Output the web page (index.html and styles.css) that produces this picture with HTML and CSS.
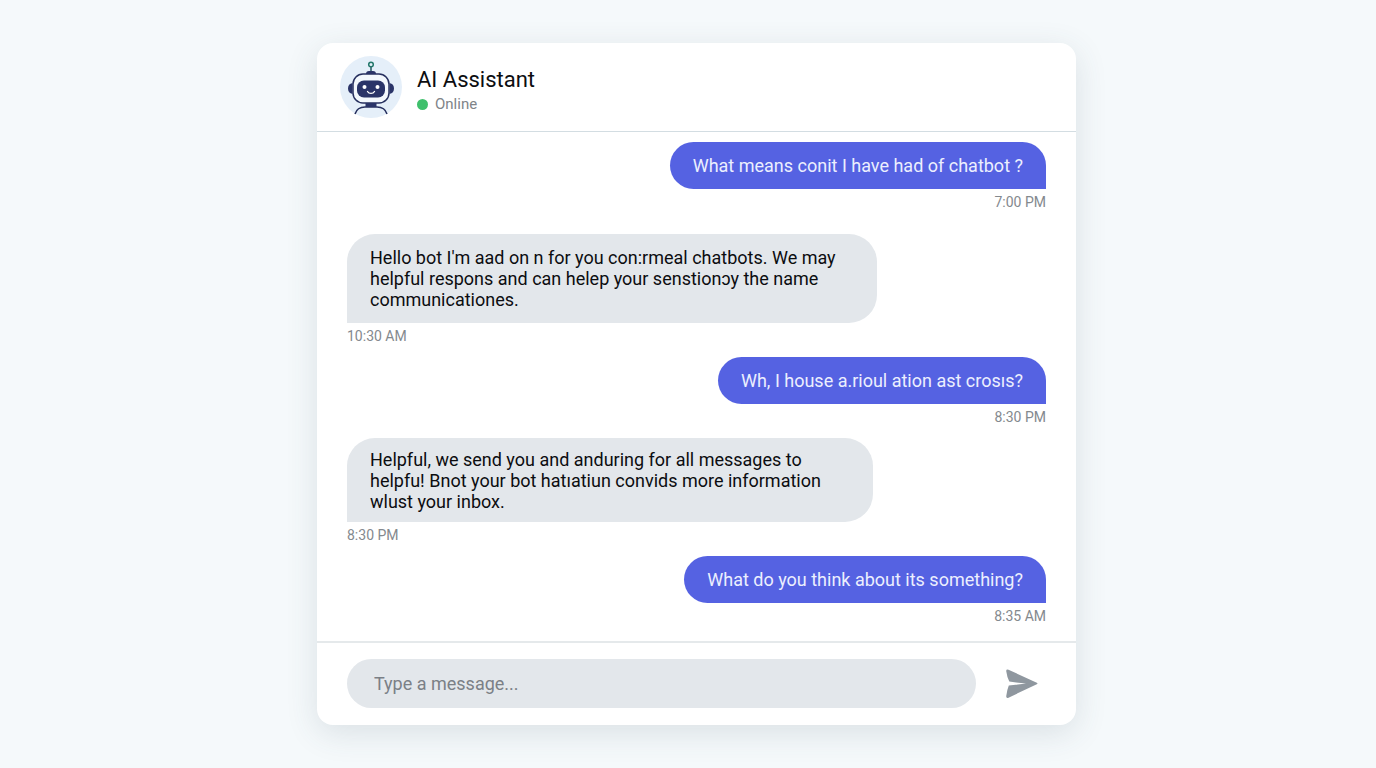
FILE: index.html
```html
<!DOCTYPE html>
<html lang="en">
<head>
<meta charset="UTF-8" />
<meta name="viewport" content="width=device-width, initial-scale=1" />
<title>AI Assistant</title>
<link rel="stylesheet" href="styles.css">
</head>
<body>
<main class="chat">
  <header class="chat-header">
    <svg class="avatar" viewBox="0 0 62 62" aria-hidden="true">
      <circle cx="31" cy="31" r="31" fill="#e5eff9"/>
      <g fill="none" stroke="#27305f" stroke-width="1.5">
        <path d="M31 11v6" stroke="#21565e"/>
        <circle cx="31" cy="8.500" r="2.300" stroke="#23776a"/>
        <rect x="13" y="18" width="36" height="29" rx="10" fill="#f3f8fd"/>
        <path d="M15 58c1.500-5 5-7 10-7h12c5 0 8.500 2 10 7"/>
      </g>
      <g fill="#2a3468">
        <path d="M26 18c0-2 1-3 3-3h4c2 0 3 1 3 3z"/>
        <path d="M12.500 27v11C9.500 37.500 8 35.500 8 32.500s1.500-5 4.500-5.500zM49.500 27v11c3-.5 4.500-2.500 4.500-5.500s-1.500-5-4.500-5.500z"/>
        <rect x="17" y="24.500" width="28" height="17" rx="7"/>
        <rect x="25.500" y="47" width="11" height="4"/>
      </g>
      <circle cx="24.500" cy="31" r="2" fill="#fff"/>
      <circle cx="37.500" cy="31" r="2" fill="#fff"/>
      <path d="M27.500 35.500c1.500 2.500 5.500 2.500 7 0" fill="none" stroke="#fff" stroke-width="1.400" stroke-linecap="round"/>
    </svg>
    <div class="contact">
      <h1>AI Assistant</h1>
      <p class="status">Online</p>
    </div>
  </header>

  <section class="messages" aria-label="Messages">
    <div class="message sent spaced">
      <p class="bubble">What means conit I have had of chatbot ?</p>
      <time>7:00 PM</time>
    </div>
    <div class="message received">
      <p class="bubble">Hello bot I'm aad on n for you con:rmeal chatbots. We may<br>helpful respons and can helep your senstionɔy the name<br>communicationes.</p>
      <time>10:30 AM</time>
    </div>
    <div class="message sent">
      <p class="bubble">Wh, I house a.rioul ation ast crosıs?</p>
      <time>8:30 PM</time>
    </div>
    <div class="message received compact">
      <p class="bubble">Helpful, we send you and anduring for all messages to<br>helpfu! Bnot your bot hatıatiun convids more information<br>wlust your inbox.</p>
      <time>8:30 PM</time>
    </div>
    <div class="message sent">
      <p class="bubble">What do you think about its something?</p>
      <time>8:35 AM</time>
    </div>
  </section>

  <form class="composer">
    <input type="text" placeholder="Type a message..." aria-label="Type a message">
    <button type="button" aria-label="Send">
      <svg viewBox="0 0 32 30" aria-hidden="true">
        <path d="M2.500.7 30.800 13.800q1.400.7 0 1.400L2.500 28.700Q.2 29.500.2 27.300 1 21 2.800 16.600L20 14.600 3.300 12.600Q1 8 .2 2 .2 0 2.500.7z" fill="#8f979f"/>
      </svg>
    </button>
  </form>
</main>
</body>
</html>
```
FILE: styles.css
```css
* { box-sizing: border-box; }

body {
  margin: 0;
  min-height: 100vh;
  padding-left: 17px;
  display: flex;
  align-items: center;
  justify-content: center;
  background: #f5f9fb;
  color: #0c0d10;
  font-family: Roboto, "Liberation Sans", sans-serif;
}

h1, p { margin: 0; }

.chat {
  width: 100%;
  max-width: 759px;
  background: #fff;
  border-radius: 16px;
  box-shadow: 0 8px 32px rgba(60, 80, 95, 0.14);
}

.chat-header {
  display: flex;
  align-items: center;
  gap: 15px;
  padding: 13px 23px;
  border-bottom: 1px solid #d3dde2;
}

.avatar {
  width: 62px;
  height: 62px;
}

.contact { padding-top: 8px; }

h1 {
  font-size: 22px;
  line-height: 26px;
  font-weight: 400;
}

.status {
  display: flex;
  align-items: center;
  gap: 7px;
  font-size: 15px;
  line-height: 22px;
  color: #808488;
}

.status::before {
  content: "";
  width: 11px;
  height: 11px;
  border-radius: 50%;
  background: #3fc06c;
}

.messages {
  display: flex;
  flex-direction: column;
  gap: 12px;
  padding: 10px 30px 16px;
}

.message {
  display: flex;
  flex-direction: column;
  gap: 4px;
}

.sent { align-items: flex-end; }
.received { align-items: flex-start; }
.spaced { margin-bottom: 11px; }

.bubble {
  padding: 13px 23px;
  border-radius: 24px;
  font-size: 18px;
  line-height: 21px;
}

.sent .bubble {
  background: #5562e2;
  color: #eceffe;
  border-bottom-right-radius: 0;
}

.received .bubble {
  background: #e3e7eb;
  padding-right: 41px;
  border-radius: 28px;
  border-bottom-left-radius: 0;
}

.compact .bubble {
  padding-top: 11px;
  padding-right: 52px;
  padding-bottom: 10px;
}

time {
  font-size: 14px;
  line-height: 18px;
  color: #84898e;
}

.composer {
  display: flex;
  align-items: center;
  gap: 30px;
  padding: 16px 38px 17px 30px;
  border-top: 2px solid #e5e9eb;
}

.composer input {
  flex: 1;
  min-width: 0;
  height: 49px;
  padding: 0 27px;
  border: 0;
  border-radius: 25px;
  background: #e3e7eb;
  font: 18px/21px Roboto, "Liberation Sans", sans-serif;
}

.composer input::placeholder { color: #7b8086; }

.composer button {
  display: flex;
  padding: 0;
  border: 0;
  background: none;
  cursor: pointer;
}

.composer svg {
  width: 32px;
  height: 30px;
}
```
